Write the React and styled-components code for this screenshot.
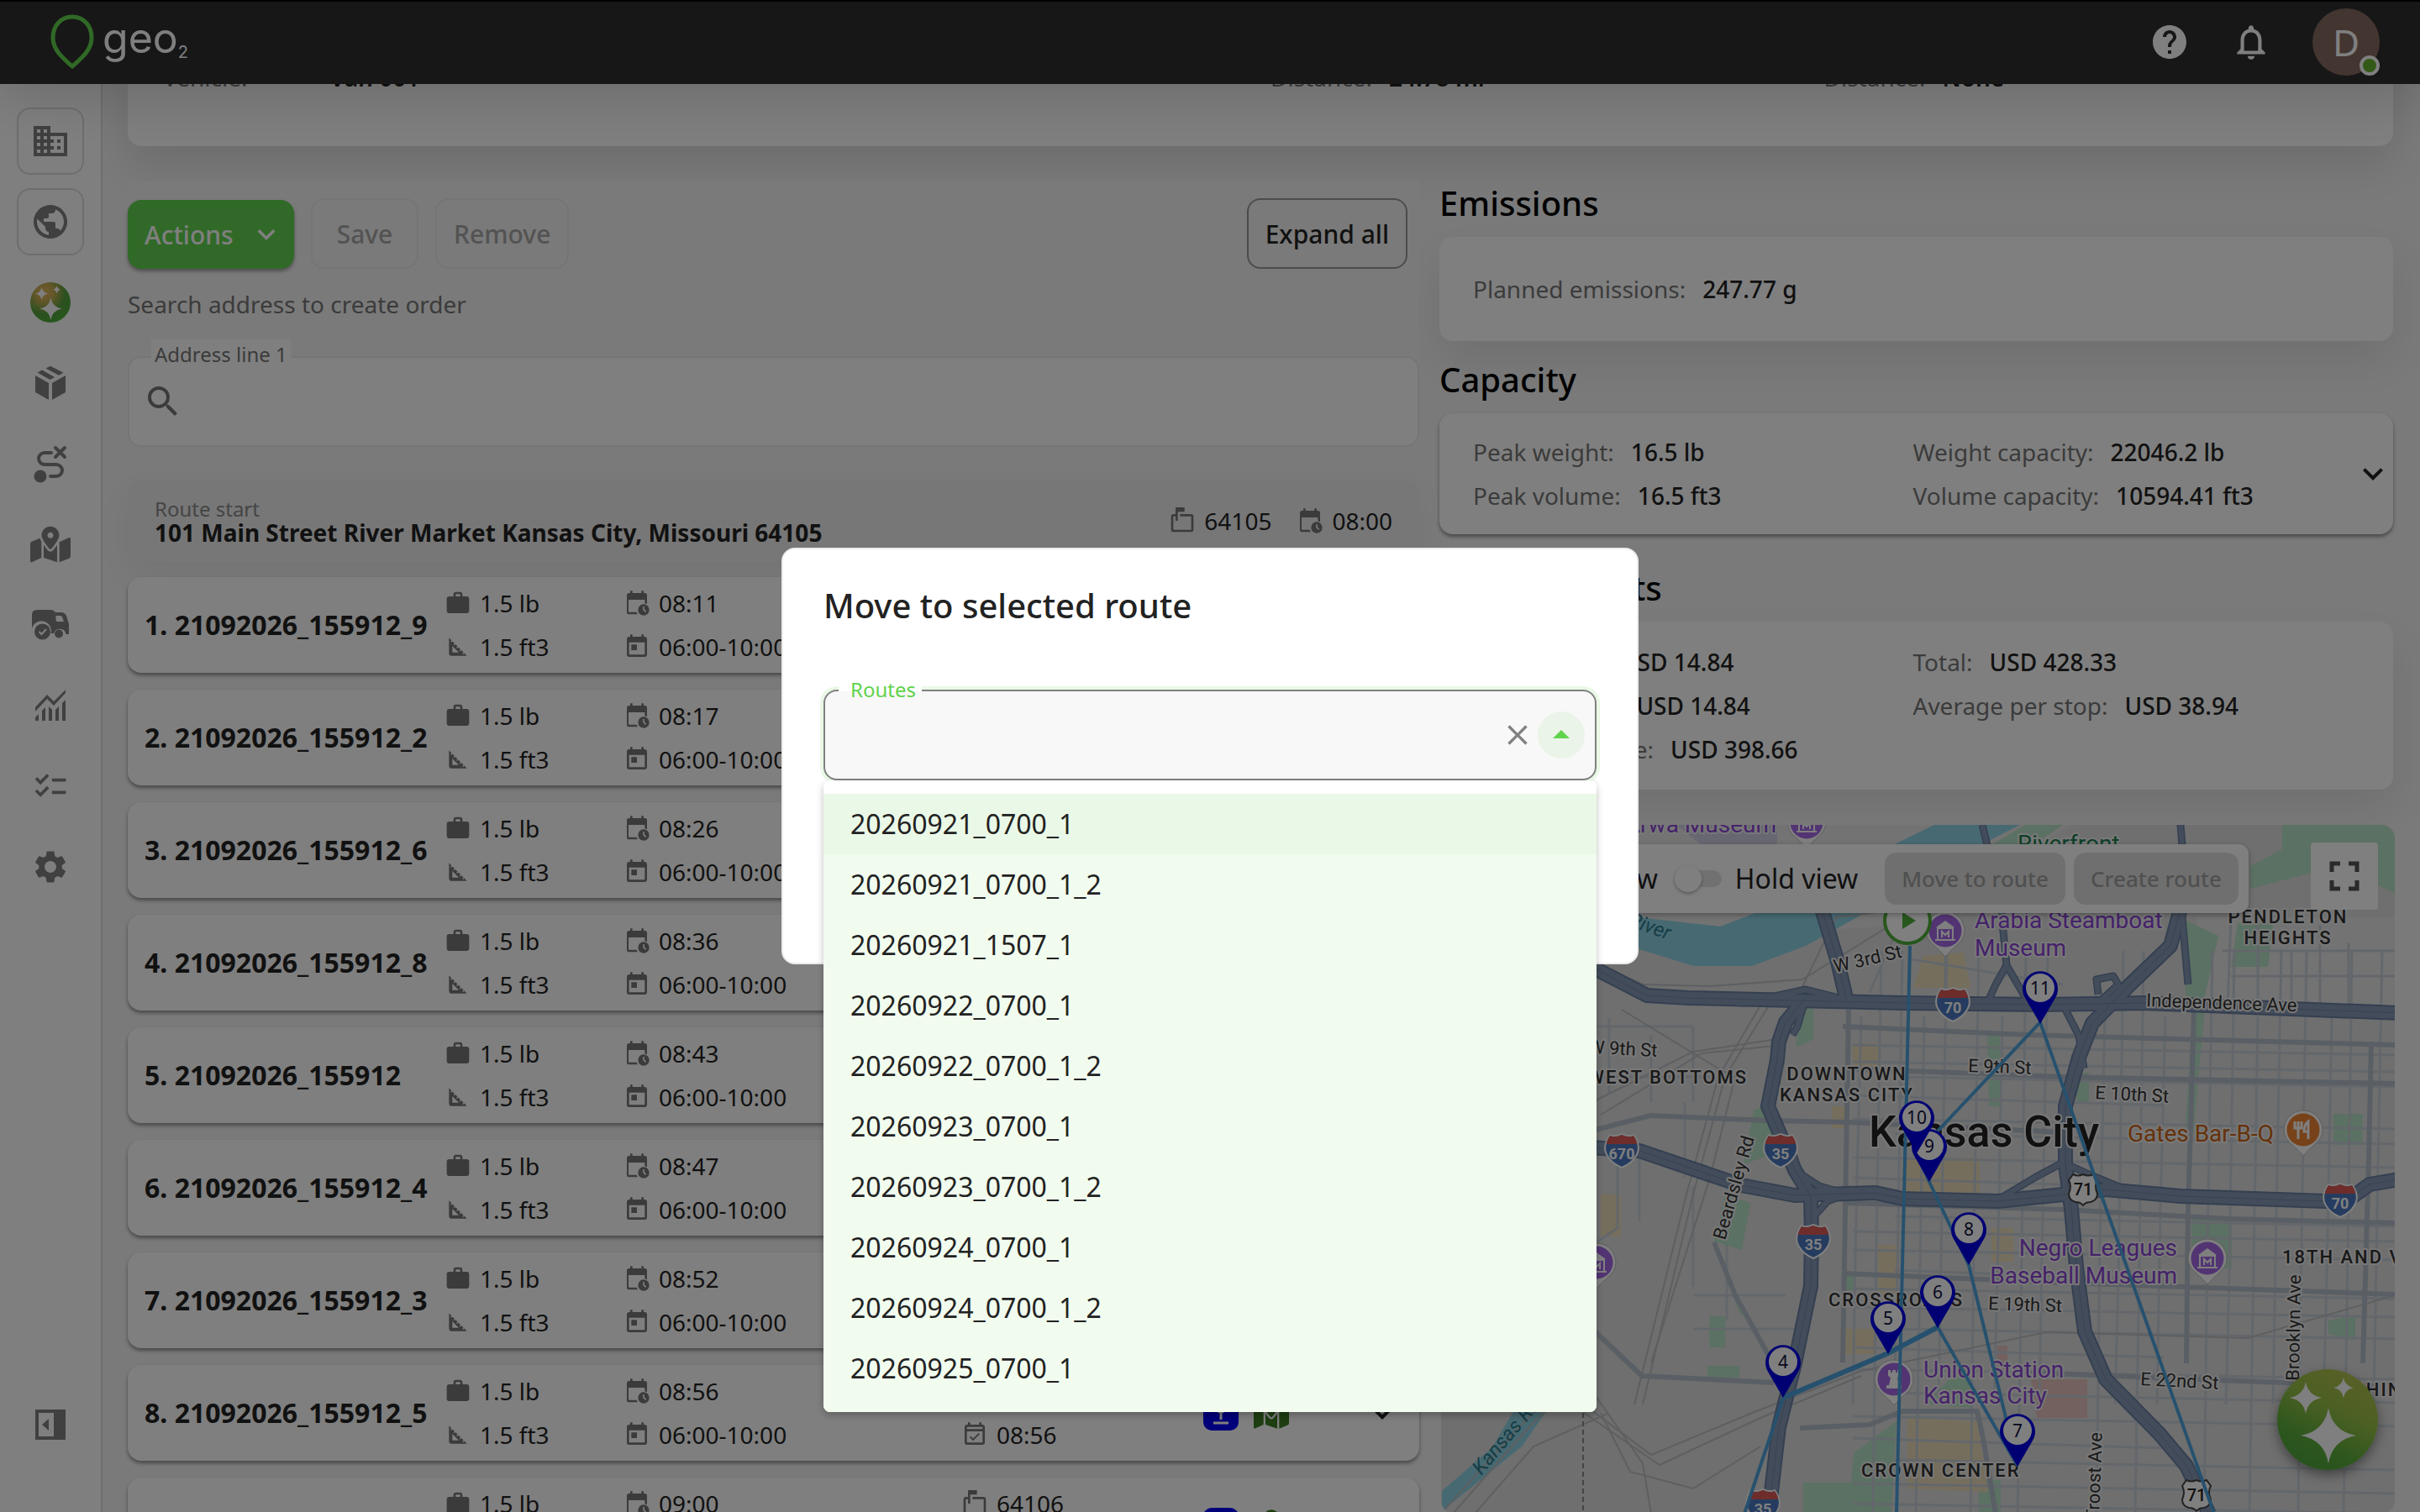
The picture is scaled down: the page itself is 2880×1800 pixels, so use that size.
import React, { useState } from "react";
import styled, { createGlobalStyle } from "styled-components";
import {
  MdDomain,
  MdPublic,
  MdChecklist,
  MdSettings,
  MdSearch,
  MdHelp,
  MdNotificationsNone,
  MdWork,
  MdSquareFoot,
  MdToday,
  MdOutlineMarkunreadMailbox,
  MdArrowDropUp,
  MdClose,
  MdExpandMore,
  MdFullscreen,
  MdOutlineEventAvailable,
} from "react-icons/md";
import { FaMapMarkedAlt } from "react-icons/fa";

const orders = [
  { id: "21092026_155912_9", eta: "08:11", zip: "64105" },
  { id: "21092026_155912_2", eta: "08:17", zip: "64105" },
  { id: "21092026_155912_6", eta: "08:26", zip: "64101" },
  { id: "21092026_155912_8", eta: "08:36", zip: "64102" },
  { id: "21092026_155912", eta: "08:43", zip: "64108" },
  { id: "21092026_155912_4", eta: "08:47", zip: "64108" },
  { id: "21092026_155912_3", eta: "08:52", zip: "64108" },
  { id: "21092026_155912_5", eta: "08:56", zip: "64108" },
  { id: "21092026_155912_1", eta: "09:00", zip: "64106" },
];

const routes = [
  "20260921_0700_1",
  "20260921_0700_1_2",
  "20260921_1507_1",
  "20260922_0700_1",
  "20260922_0700_1_2",
  "20260923_0700_1",
  "20260923_0700_1_2",
  "20260924_0700_1",
  "20260924_0700_1_2",
  "20260925_0700_1",
  "20260925_0700_1_2",
];

/* ---------- icons ---------- */

const PackageIcon = () => (
  <svg width="40" height="44" viewBox="0 0 40 44" fill="currentColor">
    <path d="M2 13l16 9v20L2 33zM38 13l-16 9v20l16-9zM4.500 9.500L10 6.500l15 8.600-5.500 3zM14.500 4.500L20 1.700l15.500 8-5.500 3z" />
  </svg>
);

const RouteIcon = () => (
  <svg width="44" height="48" viewBox="0 0 44 48" fill="none" stroke="currentColor" strokeWidth="4" strokeLinecap="round">
    <path d="M23 11h-8a7 7 0 0 0 0 14h14a7 7 0 0 1 0 14h-7" />
    <path d="M28 5l11 11M39 5L28 16" />
    <circle cx="10" cy="39" r="7.500" fill="currentColor" stroke="none" />
  </svg>
);

const TruckIcon = () => (
  <svg width="48" height="48" viewBox="0 0 48 48" fill="currentColor">
    <path d="M2 28V12q0-6 6-6h16q4 0 6 3h7q4 0 6 4l3 10v12h-3.500a7.500 7.500 0 0 0-14.500-1h-3.500A11.500 11.500 0 0 0 2 28zM30.500 13v5q0 2 2 2h7.500l-2-5.500q-.7-1.500-2.500-1.500z" fillRule="evenodd" />
    <circle cx="14.500" cy="32" r="9.500" />
    <circle cx="34" cy="34.500" r="5" />
    <path d="M10.500 32l3 3 5.500-6" fill="none" stroke="#fff" strokeWidth="2" />
  </svg>
);

const ChartIcon = () => (
  <svg width="40" height="40" viewBox="0 0 40 40" fill="currentColor">
    <path d="M2 27L16 12l8 8L38 5V1L24 15l-8-8L2 22zM2 38v-4l4-4v8zM10 38V26l4-4v16zM18 38V21l4 4v13zM26 38V25l4-4v17zM34 38V17l4-4v25z" />
  </svg>
);

const CollapseIcon = () => (
  <svg width="40" height="40" viewBox="0 0 40 40">
    <rect x="4" y="4" width="32" height="32" fill="none" stroke="currentColor" strokeWidth="4" />
    <path d="M24 4h12v32H24zM18 13v14l-8-7z" fill="currentColor" />
  </svg>
);

const CalendarClockIcon = () => (
  <svg width="32" height="32" viewBox="0 0 24 24" fill="currentColor">
    <path d="M5 20a.5.5 0 0 1-.5-.5V9H19v3.200a6 6 0 0 1 2 .8V5a2 2 0 0 0-2-2h-1V1h-2v2H8V1H6v2H5a2 2 0 0 0-2 2v15a2 2 0 0 0 2 2h7.800a6 6 0 0 1-1-2z" />
    <path d="M18 13a5 5 0 1 0 0 10 5 5 0 0 0 0-10zm1.600 7.300L17.400 18v-3h1.200v2.500l1.800 1.900z" />
  </svg>
);

const PinActionIcon = () => (
  <svg width="42" height="42" viewBox="0 0 42 42">
    <rect width="42" height="42" rx="10" fill="#0000f5" />
    <circle cx="21" cy="14" r="6" fill="none" stroke="#fff" strokeWidth="3" />
    <path d="M21 20v9M12 33h18" stroke="#fff" strokeWidth="3" />
  </svg>
);

const STAR = "M0-10Q1.500-1.500 10 0Q1.500 1.500 0 10Q-1.500 1.500-10 0Q-1.500-1.500 0-10z";

const SparkIcon = ({ size, children }) => (
  <svg width={size} height={size} viewBox="0 0 120 120">
    <defs>{children}</defs>
    <circle cx="60" cy="60" r="60" fill={`url(#spark${size})`} />
    <g fill="#fff">
      <path d={STAR} transform="translate(61 79) scale(3.3)" />
      <path d={STAR} transform="translate(34 34) scale(1.900)" />
      <path d={STAR} transform="translate(79 22) scale(1.200)" />
    </g>
  </svg>
);

const NavSpark = () => (
  <SparkIcon size={48}>
    <radialGradient id="spark48" cx="0.35" cy="0.25" r="0.8">
      <stop offset="0" stopColor="#e8b860" />
      <stop offset="0.3" stopColor="#c4ac50" />
      <stop offset="0.65" stopColor="#58a040" />
      <stop offset="1" stopColor="#4cb038" />
    </radialGradient>
  </SparkIcon>
);

const FabSpark = () => (
  <SparkIcon size={120}>
    <linearGradient id="spark120" x1="0.8" y1="0" x2="0.3" y2="1">
      <stop offset="0" stopColor="#b4c050" />
      <stop offset="0.4" stopColor="#98c048" />
      <stop offset="0.75" stopColor="#5cae3c" />
      <stop offset="1" stopColor="#50a43c" />
    </linearGradient>
  </SparkIcon>
);

/* ---------- map ---------- */

const minorV = [500, 524, 549, 575, 602, 640, 668, 696, 722, 790, 812, 836, 862, 918, 944, 972, 1000, 1030, 1060, 1084, 1120];
const minorH = [244, 262, 282, 300, 322, 350, 368, 396, 420, 466, 484, 506, 530, 552, 574, 600, 622, 648, 676, 704, 730, 756, 784, 808];

const highways = [
  "130,130 185,172 245,203 294,206 549,212 714,214 836,212 1140,224",
  "434,206 410,235 402,258 400,280 389,335 402,365 421,411 440,442 441,488 440,549 421,641 402,717 390,820",
  "150,382 236,388 357,429 421,441 517,438 549,445 663,448 740,440 791,434 880,442 1053,448 1080,446 1105,428 1140,422",
  "880,100 868,144 820,190 775,236 759,277 743,335 743,404 750,457 756,526 766,603 791,660 855,725 887,763 914,820",
  "453,100 472,163 482,206",
];

const ramps = [
  "663,446 708,419 740,402 778,419 829,440",
  "667,104 670,137 673,167 695,205 714,214",
  "673,167 660,190 650,212",
  "644,0 650,24",
  "880,0 882,24",
  "294,206 360,212 434,196 470,205",
  "740,214 759,251 765,290",
  "882,110 889,190",
  "782,202 780,184 800,180 806,190 786,208",
  "421,411 450,430 478,438",
  "440,470 460,448 480,440",
  "402,365 420,395 432,440",
  "434,206 424,240 418,250",
];

const streets = [
  "485,220 482,400 478,640",
  "896,220 889,457 887,641",
  "1107,258 1104,400 1097,641",
  "478,240 700,250 1135,262",
  "180,364 249,346 390,352 485,354 740,366",
  "478,450 740,458 938,469 1135,474",
  "478,534 740,545 1135,559",
  "180,600 239,656 396,664",
  "702,652 900,660 1110,668",
  "427,718 510,714 549,698 638,698 645,730 660,820",
  "478,290 740,300 1135,308",
  "325,497 350,560 400,650",
];

const rails = [
  "215,220 330,290 350,300 320,420 250,640",
  "180,330 300,270 400,255 470,110 520,104",
  "190,345 310,272 408,262",
  "380,215 330,300 292,440 230,690",
  "390,215 338,300 300,440 240,690",
  "185,165 240,190 320,192 430,184 560,104",
  "170,690 250,750 370,700 500,650 720,604 960,611 1135,560",
  "170,700 260,762 380,706 500,656",
  "0,820 90,720 150,660",
  "14,820 100,722 160,660",
  "40,820 110,740 200,700",
  "170,660 240,760 250,820",
  "190,700 225,770 300,790 380,740",
];

const Shield = ({ x, y, n }) => (
  <g transform={`translate(${x} ${y})`}>
    <path d="M-14-19q5 3 14-1q9 4 14 1q10 14 3 25q-5 9-17 14q-12-5-17-14q-7-11 3-25z" fill="#4a78c0" stroke="#fff" strokeWidth="2" />
    <path d="M-14-18q5 3 14-1q9 4 14 1q4 6 4 10h-36q0-4 4-10z" fill="#dc5a54" />
    <text y="10" fontSize="18" fontWeight="700" fill="#fff" textAnchor="middle">{n}</text>
  </g>
);

const UsShield = ({ x, y }) => (
  <g transform={`translate(${x} ${y})`}>
    <path d="M-12-18q6 3 12 0q6 3 12 0l5 7q-4 7 0 16q0 8-8 10q-6 0-9 4q-3-4-9-4q-8-2-8-10q4-9 0-16z" fill="#fff" stroke="#444" strokeWidth="2" />
    <text y="7" fontSize="20" fontWeight="500" fill="#222" textAnchor="middle">71</text>
  </g>
);

const Poi = ({ x, y, color = "#a468e6", kind = "museum" }) => (
  <g transform={`translate(${x} ${y})`}>
    <path d="M0-24a23 23 0 0 1 23 23q0 10-10 18Q5 24 0 30Q-5 24-13 17Q-23 9-23-1A23 23 0 0 1 0-24z" fill="#fff" stroke="#bbb" />
    <circle cy="-1" r="19.500" fill={color} />
    {kind === "museum" && (
      <g fill="none" stroke="#fff" strokeWidth="2">
        <path d="M-9 9V-4h18V9M-12 10h24M-4 7v-7l4 4 4-4v7" />
        <path d="M-11-5h22L0-13z" fill="#fff" stroke="none" />
      </g>
    )}
    {kind === "food" && (
      <path d="M-6-11v21M-10-11v8h8v-8M6 10V-11q-5 4-5 12h5" fill="none" stroke="#fff" strokeWidth="3" />
    )}
    {kind === "tower" && (
      <path d="M-7-12h3v3h2v-3h4v3h2v-3h3v7l-3 2 2 9h3v4H-9v-4h3l2-9-3-2z" fill="#fff" />
    )}
  </g>
);

const Pin = ({ x, y, n }) => (
  <g transform={`translate(${x} ${y})`}>
    <path d="M0 0L-18-31A21 21 0 1 1 18-31z" fill="#0000e6" />
    <circle cy="-43" r="17" fill="#fff" />
    <text y="-35" fontSize="21" fill="#101040" textAnchor="middle" fontFamily="Noto Sans, sans-serif">{n}</text>
  </g>
);

const RouteMap = () => (
  <MapSvg>
    <rect width="100%" height="100%" fill="#dedede" />
    <path d="M150 0h600l-200 120-370 20zM900 110h240v110H900z" fill="#e6e6e6" />
    <g fill="#b6e2c6">
      <path d="M1001 0h140v84l-30-14-71-14-77 20V49l38-20zM883 112l42 20-20 90h-18zM695 0h45l-35 24h-50z" />
      <path d="M425 215h18v40l-20 10zM372 340l20-10 8 60-40 14zM338 440l30 10-10 56-33-10zM650 247h15v88h-13zM756 295h15v36h-15z" />
      <path d="M893 466h48v62h-48zM1062 344h35v37h-35zM1056 590l32-6v30l-32-8zM319 585h19v37h-19zM317 644h38v14h-38zM338 535l26 48h-8zM479 534h12v20h-12z" />
      <path d="M542 710l-51 38-3 35h-57v40h105zM575 690l50-50 8 54zM895 220h14l-14 150h-10zM948 117h42l-6 52h-44zM640 780h26v40h-26z" />
    </g>
    <g fill="#eddcb8">
      <path d="M574 156l48-4 8 42h-68zM549 396h92v42h-92zM555 706l83 4 13 84-96-4zM490 260h30v30h-30zM465 335h16v26h-16zM520 500h22v60h-22zM190 440h24v50h-24zM475 600h40v30h-40zM655 480h26v40h-26z" />
    </g>
    <path d="M702 660h67v46h-60zM662 620h12v34h-12z" fill="#e6c2be" />
    <path d="M280 0h120v24h-90z" fill="#cfcfe4" />
    <path d="M587 0h102L638 26 504 105l-70 39-64 24h-70l-64-20-60-70 59 32 97 11 44-17 166-82zM1 793l60-52 30-51h40l-35 50L1 817zM196 168l16 10-10 12-12-8z" fill="#8fd3e4" />
    <g fill="none" stroke="#c6ced6" strokeWidth="3">
      {minorV.map((x, i) => (
        <path key={x} d={`M${x} ${i % 3 === 0 ? 228 : 150}L${x - 6} ${460 + (i % 4) * 40}L${x - 10} ${i % 2 ? 820 : 690}`} />
      ))}
      {minorH.map((y, i) => (
        <path key={y} d={`M${i % 3 ? 490 : 540} ${y}L${i % 4 ? 1136 : 860} ${y + 12}`} />
      ))}
      <path d="M940 110l-4 110M972 100v120M1012 150v70M1046 120v100M1080 140v80M930 150h205M940 180h195M560 160l180 30M540 130l-30 70M600 150v60" />
      <path d="M200 230v90M250 250v80M300 240v90M180 300h160M180 240h120M290 330v90M300 430v120M340 500v90M300 560h110M300 600h120M210 390v90l-30 20M236 392v80" />
    </g>
    <g fill="none" stroke="#bcbec2" strokeWidth="2">
      {rails.map((p) => <polyline key={p} points={p} />)}
    </g>
    <g fill="none" stroke="#b4bfca" strokeWidth="6">
      {streets.map((p) => <polyline key={p} points={p} />)}
    </g>
    <g fill="none" strokeLinejoin="round">
      {ramps.map((p) => <polyline key={p} points={p} stroke="#687fa2" strokeWidth="9" />)}
      {highways.map((p) => <polyline key={p} points={p} stroke="#687fa2" strokeWidth="18" />)}
      {ramps.map((p) => <polyline key={p} points={p} stroke="#8799b4" strokeWidth="6" />)}
      {highways.map((p) => <polyline key={p} points={p} stroke="#8799b4" strokeWidth="14" />)}
      {highways.map((p) => <polyline key={p} points={p} stroke="#7085a4" strokeWidth="1" />)}
    </g>
    <path d="M169 700v120" stroke="#888" strokeWidth="2" strokeDasharray="6 4" />

    <MapLabels>
      <g className="street">
        <text x="257" y="276" textAnchor="end" transform="rotate(3 257 276)">W 9th St</text>
        <text x="469" y="176" transform="rotate(-13 469 176)">W 3rd St</text>
        <text x="627" y="294" transform="rotate(2 627 294)">E 9th St</text>
        <text x="778" y="326" transform="rotate(3 778 326)">E 10th St</text>
        <text x="651" y="577" transform="rotate(2 651 577)">E 19th St</text>
        <text x="832" y="667" transform="rotate(3 832 667)">E 22nd St</text>
        <text x="839" y="216" transform="rotate(2 839 216)">Independence Ave</text>
        <text x="338" y="495" transform="rotate(-74 338 495)">Beardsley Rd</text>
        <text x="1021" y="662" transform="rotate(-89 1021 662)">Brooklyn Ave</text>
        <text x="783" y="828" transform="rotate(-88 783 828)">Troost Ave</text>
      </g>
      <g className="district">
        <text x="365" y="308" textAnchor="end">WEST BOTTOMS</text>
        <text x="483" y="304" textAnchor="middle">DOWNTOWN</text>
        <text x="483" y="329" textAnchor="middle">KANSAS CITY</text>
        <text x="461" y="573">CROSSROADS</text>
        <text x="500" y="776">CROWN CENTER</text>
        <text x="1001" y="522">18TH AND VINE</text>
        <text x="1048" y="680">WASHINGTON</text>
        <text x="1008" y="117" textAnchor="middle">PENDLETON</text>
        <text x="1008" y="142" textAnchor="middle">HEIGHTS</text>
      </g>
      <text className="city" x="509" y="383">Kansas City</text>
      <g className="museum">
        <text x="399" y="9" textAnchor="end">Arwa Museum</text>
        <text x="635" y="123">Arabia Steamboat</text>
        <text x="635" y="156">Museum</text>
        <text x="876" y="513" textAnchor="end">Negro Leagues</text>
        <text x="876" y="546" textAnchor="end">Baseball Museum</text>
        <text x="574" y="658">Union Station</text>
        <text x="574" y="689">Kansas City</text>
      </g>
      <text className="food" x="991" y="377" textAnchor="end">Gates Bar-B-Q</text>
      <text className="park" x="686" y="32">Riverfront</text>
      <text className="water" x="270" y="137" textAnchor="end" transform="rotate(20 270 137)">Missouri River</text>
      <text className="water" x="48" y="775" transform="rotate(-50 48 775)">Kansas River</text>
    </MapLabels>

    <Shield x="609" y="214" n="70" />
    <Shield x="215" y="388" n="670" />
    <Shield x="404" y="388" n="35" />
    <Shield x="443" y="496" n="35" />
    <Shield x="383" y="811" n="35" />
    <Shield x="1070" y="447" n="70" />
    <UsShield x="764" y="434" />
    <UsShield x="899" y="798" />
    <Poi x="435" y="-2" />
    <Poi x="600" y="127" />
    <Poi x="912" y="517" />
    <Poi x="539" y="661" kind="tower" />
    <Poi x="185" y="522" />
    <Poi x="1026" y="364" color="#ee8434" kind="food" />

    <g fill="none" stroke="#4da3dc" strokeWidth="4">
      <path d="M558 144L542 820M361 820L407 682M532 629L591 598L686 763L628 524L581 425L566 391L713 235L920 820" />
      <path d="M407 682L532 629L591 598" strokeWidth="6" />
    </g>
    <circle cx="555" cy="114" r="27" fill="#fff" stroke="#4fae3a" strokeWidth="4" />
    <path d="M549 104v20l16-10z" fill="#4fae3a" />
    <Pin x="713" y="237" n="11" />
    <Pin x="581" y="425" n="9" />
    <Pin x="566" y="391" n="10" />
    <Pin x="628" y="524" n="8" />
    <Pin x="591" y="599" n="6" />
    <Pin x="532" y="630" n="5" />
    <Pin x="407" y="682" n="4" />
    <Pin x="686" y="764" n="7" />
  </MapSvg>
);

/* ---------- page ---------- */

const Stat = ({ label, value }) => (
  <StatLine>
    <span>{label}:</span>
    <strong>{value}</strong>
  </StatLine>
);

const Meta = ({ icon, children }) => (
  <MetaLine>
    <MetaIcon>{icon}</MetaIcon>
    {children}
  </MetaLine>
);

const OrderRow = ({ index, order }) => (
  <OrderCard>
    <OrderTitle>{index}. {order.id}</OrderTitle>
    <div>
      <Meta icon={<MdWork size={32} />}>1.5 lb</Meta>
      <Meta icon={<MdSquareFoot size={32} />}>1.5 ft3</Meta>
    </div>
    <div>
      <Meta icon={<CalendarClockIcon />}>{order.eta}</Meta>
      <Meta icon={<MdToday size={32} />}>06:00-10:00</Meta>
    </div>
    <div>
      <Meta icon={<MdOutlineMarkunreadMailbox size={32} />}>{order.zip}</Meta>
      <Meta icon={<MdOutlineEventAvailable size={32} />}>{order.eta}</Meta>
    </div>
    <OrderActions>
      <IconButton aria-label="Locate order"><PinActionIcon /></IconButton>
      <IconButton aria-label="Show on map" $color="#3a7d20"><FaMapMarkedAlt size={42} /></IconButton>
      <IconButton aria-label="Expand order" $end $color="#222"><MdExpandMore size={48} /></IconButton>
    </OrderActions>
  </OrderCard>
);

const App = () => {
  const [route, setRoute] = useState("");
  const [active, setActive] = useState(0);

  return (
    <Shell>
      <GlobalStyle />
      <Header>
        <Logo>
          <svg width="56" height="66" viewBox="0 0 56 66">
            <path d="M28 3C13 3 5 15 5 28c0 15 13 25 23 34 10-9 23-19 23-34C51 15 43 3 28 3z" fill="none" stroke="#60d34c" strokeWidth="5" />
          </svg>
          <LogoText>geo<sub>2</sub></LogoText>
        </Logo>
        <HeaderTools>
          <IconButton aria-label="Help" $color="#fff"><MdHelp size={48} /></IconButton>
          <IconButton aria-label="Notifications" $color="#fff"><MdNotificationsNone size={50} /></IconButton>
          <Avatar>D<StatusDot /></Avatar>
        </HeaderTools>
      </Header>

      <Body>
        <Sidebar>
          <NavButton $boxed aria-label="Company"><MdDomain size={48} /></NavButton>
          <NavButton $boxed aria-label="Region"><MdPublic size={48} /></NavButton>
          <NavButton aria-label="Assistant"><NavSpark /></NavButton>
          <NavButton aria-label="Orders"><PackageIcon /></NavButton>
          <NavButton aria-label="Routes"><RouteIcon /></NavButton>
          <NavButton aria-label="Map"><FaMapMarkedAlt size={48} /></NavButton>
          <NavButton aria-label="Vehicles"><TruckIcon /></NavButton>
          <NavButton aria-label="Analytics"><ChartIcon /></NavButton>
          <NavButton aria-label="Tasks"><MdChecklist size={44} /></NavButton>
          <NavButton aria-label="Settings"><MdSettings size={46} /></NavButton>
          <NavButton $last aria-label="Collapse menu"><CollapseIcon /></NavButton>
        </Sidebar>

        <Main>
          <InfoCard>
            <InfoLine $wide><span>Vehicle:</span><strong>Van 001</strong></InfoLine>
            <InfoLine><span>Distance:</span><strong>24.78 mi</strong></InfoLine>
            <InfoLine><span>Distance:</span><strong>None</strong></InfoLine>
          </InfoCard>

          <Columns>
            <OrdersPane>
              <Toolbar>
                <PrimaryButton>Actions <MdExpandMore size={42} /></PrimaryButton>
                <OutlineButton disabled>Save</OutlineButton>
                <OutlineButton disabled>Remove</OutlineButton>
                <OutlineButton $end>Expand all</OutlineButton>
              </Toolbar>
              <Hint>Search address to create order</Hint>
              <AddressField>
                <label htmlFor="address">Address line 1</label>
                <MdSearch size={48} />
                <input id="address" type="text" />
              </AddressField>

              <RouteStart>
                <div>
                  <small>Route start</small>
                  <b>101 Main Street River Market Kansas City, Missouri 64105</b>
                </div>
                <RouteStartMeta>
                  <Meta icon={<MdOutlineMarkunreadMailbox size={32} />}>64105</Meta>
                  <Meta icon={<CalendarClockIcon />}>08:00</Meta>
                </RouteStartMeta>
              </RouteStart>

              <OrderList>
                {orders.map((order, i) => (
                  <OrderRow key={order.id} index={i + 1} order={order} />
                ))}
              </OrderList>
            </OrdersPane>

            <SidePane>
              <PanelTitle>Emissions</PanelTitle>
              <StatCard $tall>
                <StatGrid>
                  <Stat label="Planned emissions" value="247.77 g" />
                </StatGrid>
              </StatCard>
              <PanelTitle>Capacity</PanelTitle>
              <StatCard $raised>
                <StatGrid>
                  <Stat label="Peak weight" value="16.5 lb" />
                  <Stat label="Weight capacity" value="22046.2 lb" />
                  <Stat label="Peak volume" value="16.5 ft3" />
                  <Stat label="Volume capacity" value="10594.41 ft3" />
                </StatGrid>
                <IconButton aria-label="Expand capacity" $color="#222"><MdExpandMore size={48} /></IconButton>
              </StatCard>
              <PanelTitle $spaced>Planned costs</PanelTitle>
              <StatCard>
                <StatGrid>
                  <Stat label="Driver time" value="USD 14.84" />
                  <Stat label="Total" value="USD 428.33" />
                  <Stat label="Waiting time" value="USD 14.84" />
                  <Stat label="Average per stop" value="USD 38.94" />
                  <Stat label="Fixed per usage" value="USD 398.66" />
                </StatGrid>
              </StatCard>

              <MapBox>
                <RouteMap />
                <MapToolbar>
                  <SwitchLabel><input type="checkbox" />Map view</SwitchLabel>
                  <SwitchLabel><input type="checkbox" />Hold view</SwitchLabel>
                  <MapActions>
                    <MapButton disabled>Move to route</MapButton>
                    <MapButton disabled>Create route</MapButton>
                  </MapActions>
                </MapToolbar>
                <FullscreenButton aria-label="Fullscreen"><MdFullscreen size={60} /></FullscreenButton>
              </MapBox>
            </SidePane>
          </Columns>
        </Main>
      </Body>

      <Fab aria-label="Assistant"><FabSpark /></Fab>

      <Backdrop>
        <Dialog role="dialog" aria-labelledby="move-title">
          <DialogTitle id="move-title">Move to selected route</DialogTitle>
          <RouteField>
            <label htmlFor="routes">Routes</label>
            <input id="routes" type="text" value={route} onChange={(e) => setRoute(e.target.value)} />
            <IconButton aria-label="Clear" $color="#808080" onClick={() => setRoute("")}><MdClose size={40} /></IconButton>
            <ToggleButton aria-label="Close list"><MdArrowDropUp size={48} /></ToggleButton>
            <Menu role="listbox">
              {routes.map((name, i) => (
                <Option
                  key={name}
                  role="option"
                  aria-selected={i === active}
                  $active={i === active}
                  onMouseEnter={() => setActive(i)}
                  onClick={() => setRoute(name)}
                >
                  {name}
                </Option>
              ))}
            </Menu>
          </RouteField>
        </Dialog>
      </Backdrop>
    </Shell>
  );
};

export default App;

const GlobalStyle = createGlobalStyle`
  * {
    box-sizing: border-box;
  }
  body {
    margin: 0;
    background: #f4f4f4;
    color: #222;
    font: 400 28px/40px "Noto Sans", sans-serif;
  }
  button, input {
    font-family: inherit;
  }
  button {
    cursor: pointer;
  }
  svg {
    flex-shrink: 0;
  }
`;

const Shell = styled.div`
  display: flex;
  flex-direction: column;
  height: 100vh;
  overflow: hidden;
`;

const Header = styled.header`
  position: relative;
  z-index: 2;
  display: flex;
  align-items: center;
  justify-content: space-between;
  flex-shrink: 0;
  height: 100px;
  padding: 0 48px 0 58px;
  background: #2e2e2e;
  box-shadow: inset 0 2px 0 #000, 0 16px 64px rgba(0, 0, 0, 0.16);
`;

const Logo = styled.div`
  display: flex;
  align-items: center;
  gap: 8px;
`;

const LogoText = styled.div`
  padding-bottom: 10px;
  color: #fff;
  font: 400 50px/60px Inter, sans-serif;

  sub {
    font-size: 20px;
    line-height: 20px;
    vertical-align: -6px;
  }
`;

const HeaderTools = styled.div`
  display: flex;
  align-items: center;
  gap: 48px;
`;

const IconButton = styled.button`
  display: flex;
  align-items: center;
  justify-content: center;
  padding: 0;
  border: 0;
  background: none;
  color: ${({ $color }) => $color || "inherit"};
  margin-left: ${({ $end }) => ($end ? "auto" : "0")};
`;

const Avatar = styled.div`
  position: relative;
  width: 80px;
  height: 80px;
  border-radius: 50%;
  background: #866b61;
  color: #fff;
  font-size: 44px;
  line-height: 80px;
  text-align: center;
`;

const StatusDot = styled.span`
  position: absolute;
  right: 0;
  bottom: 0;
  width: 24px;
  height: 24px;
  border: 4px solid #fff;
  border-radius: 50%;
  background: #64b32c;
`;

const Body = styled.div`
  display: flex;
  flex: 1;
  min-height: 0;
`;

const Sidebar = styled.nav`
  display: flex;
  flex-direction: column;
  align-items: center;
  gap: 16px;
  flex-shrink: 0;
  width: 122px;
  padding: 28px 0 64px;
  border-right: 2px solid #dcdcdc;
  background: #fff;
`;

const NavButton = styled.button`
  display: flex;
  align-items: center;
  justify-content: center;
  flex-shrink: 0;
  width: 80px;
  height: 80px;
  padding: 0;
  border: ${({ $boxed }) => ($boxed ? "2px solid #dcdcdc" : "0")};
  border-radius: 16px;
  background: none;
  color: #808080;
  margin-top: ${({ $last }) => ($last ? "auto" : "0")};
`;

const Main = styled.main`
  flex: 1;
  min-width: 0;
  padding: 0 32px 0 30px;
  overflow: hidden;
`;

const InfoCard = styled.section`
  display: grid;
  grid-template-columns: 1317fr 658fr 677fr;
  height: 134px;
  margin: -60px 0 0;
  padding: 32px 0 0 42px;
  border-radius: 16px;
  background: #fff;
  box-shadow: 0 24px 48px rgba(0, 0, 0, 0.1);
`;

const InfoLine = styled.div`
  display: flex;
  gap: ${({ $wide }) => ($wide ? "98px" : "20px")};

  span {
    color: #777;
  }
  strong {
    font-weight: 600;
  }
`;

const Columns = styled.div`
  display: grid;
  grid-template-columns: 1537fr 1135fr;
  gap: 24px;
  padding-top: 42px;
`;

const OrdersPane = styled.section`
  position: relative;
  min-width: 0;
  padding-top: 20px;
  background: #f4f4f4;
`;

const Toolbar = styled.div`
  display: flex;
  align-items: flex-end;
  gap: 20px;
  padding-right: 14px;
`;

const PrimaryButton = styled.button`
  display: flex;
  align-items: center;
  justify-content: space-between;
  width: 198px;
  height: 82px;
  padding: 0 12px 0 20px;
  border: 0;
  border-radius: 16px;
  background: #62d450;
  color: #fff;
  font-size: 30px;
  font-weight: 500;
  box-shadow: 0 3px 4px rgba(0, 0, 0, 0.35);
`;

const OutlineButton = styled.button`
  min-width: 128px;
  height: 84px;
  padding: 0 20px;
  border: 2px solid #999;
  border-radius: 16px;
  background: none;
  color: #222;
  font-size: 30px;
  font-weight: 500;
  margin-left: ${({ $end }) => ($end ? "auto" : "0")};

  &:disabled {
    border-color: #eaeaea;
    color: #a6a6a6;
  }
`;

const Hint = styled.p`
  margin: 22px 0 42px;
  color: #777;
`;

const AddressField = styled.div`
  position: relative;
  display: flex;
  align-items: center;
  height: 108px;
  padding: 0 16px;
  border: 2px solid #ebebeb;
  border-radius: 16px;
  background: #fff;
  color: #777;

  label {
    position: absolute;
    top: -22px;
    left: 26px;
    padding: 0 4px;
    background: #fff;
    font-size: 24px;
    line-height: 36px;
  }
  input {
    flex: 1;
    border: 0;
    outline: 0;
    background: none;
    font-size: 32px;
  }
`;

const RouteStart = styled.div`
  display: flex;
  align-items: center;
  justify-content: space-between;
  height: 98px;
  margin: 39px 0 18px;
  padding: 0 32px;
  border-radius: 16px;
  background: #eeeeee;
  box-shadow: 0 16px 40px rgba(0, 0, 0, 0.05);

  small, b {
    display: block;
    line-height: 28px;
  }
  small {
    color: #8a8a8a;
    font-size: 24px;
  }
  b {
    font-weight: 700;
  }
`;

const RouteStartMeta = styled.div`
  display: flex;
  gap: 30px;
`;

const MetaLine = styled.div`
  display: flex;
  align-items: center;
  gap: 10px;
  height: 52px;
  white-space: nowrap;
`;

const MetaIcon = styled.span`
  display: flex;
  justify-content: center;
  width: 32px;
  color: #777;
`;

const OrderList = styled.div`
  display: flex;
  flex-direction: column;
  gap: 20px;
`;

const OrderCard = styled.article`
  display: grid;
  grid-template-columns: 357px 213px 402px 288px 1fr;
  align-items: center;
  height: 114px;
  padding: 0 20px;
  border-radius: 16px;
  background: #fff;
  box-shadow: 0 3px 4px rgba(0, 0, 0, 0.4);
`;

const OrderTitle = styled.h3`
  margin: 0;
  font-size: 32px;
  font-weight: 700;
  white-space: nowrap;
`;

const OrderActions = styled.div`
  display: flex;
  align-items: center;
  gap: 18px;
`;

const SidePane = styled.aside`
  min-width: 0;
`;

const PanelTitle = styled.h2`
  margin: ${({ $spaced }) => ($spaced ? "38px" : "0")} 0 14px;
  color: #000;
  font-size: 40px;
  font-weight: 500;
  line-height: 52px;
`;

const StatCard = styled.div`
  display: flex;
  align-items: center;
  min-height: ${({ $tall }) => ($tall ? "124px" : "0")};
  margin-bottom: ${({ $raised }) => ($raised ? "0" : "20px")};
  padding: ${({ $raised }) => ($raised ? "20px 0 20px 40px" : "22px 48px 22px 40px")};
  border-radius: 16px;
  background: #fff;
  box-shadow: ${({ $raised }) =>
    $raised ? "0 3px 4px rgba(0, 0, 0, 0.4)" : "0 24px 48px rgba(0, 0, 0, 0.08)"};
`;

const StatGrid = styled.div`
  display: grid;
  grid-template-columns: 1fr 1fr;
  flex: 1;
`;

const StatLine = styled.div`
  display: flex;
  gap: 20px;
  line-height: 52px;
  white-space: nowrap;

  span {
    color: #777;
  }
  strong {
    font-weight: 500;
  }
`;

const MapBox = styled.div`
  position: relative;
  height: 820px;
  margin: 42px -2px 0 2px;
  border-radius: 16px;
  overflow: hidden;
`;

const MapSvg = styled.svg`
  display: block;
  width: 100%;
  height: 100%;
  font-family: Roboto, sans-serif;
`;

const MapLabels = styled.g`
  text {
    paint-order: stroke;
    stroke: #f0f0f0;
    stroke-width: 4px;
    stroke-linejoin: round;
  }
  .street {
    font-size: 22px;
    fill: #333;
  }
  .district {
    font-size: 22px;
    font-weight: 500;
    letter-spacing: 2px;
    fill: #333;
  }
  .city {
    font-size: 52px;
    font-weight: 500;
    fill: #222;
  }
  .museum {
    font-size: 28px;
    fill: #8a44d4;
  }
  .food {
    font-size: 28px;
    fill: #cc6414;
  }
  .park {
    font-size: 28px;
    fill: #1e7f50;
  }
  .water {
    font-size: 24px;
    font-style: italic;
    fill: #2c7c8c;
    stroke: none;
  }
`;

const MapToolbar = styled.div`
  position: absolute;
  top: 23px;
  left: 20px;
  right: 174px;
  display: flex;
  align-items: center;
  justify-content: flex-end;
  gap: 20px;
  height: 82px;
  padding: 0 12px;
  border-radius: 12px;
  background: #fff;
  box-shadow: 0 2px 6px rgba(0, 0, 0, 0.3);
`;

const SwitchLabel = styled.label`
  display: flex;
  align-items: center;
  gap: 16px;
  font-size: 32px;

  input {
    appearance: none;
    width: 56px;
    height: 20px;
    margin: 0;
    border-radius: 10px;
    background: #e2e2e2;
  }
  input::before {
    content: "";
    display: block;
    width: 32px;
    height: 32px;
    margin-top: -6px;
    border-radius: 50%;
    background: #fff;
    box-shadow: 0 2px 4px rgba(0, 0, 0, 0.3);
  }
`;

const MapActions = styled.div`
  display: flex;
  gap: 10px;
  margin-left: 12px;
`;

const MapButton = styled.button`
  height: 62px;
  padding: 0 20px;
  border: 0;
  border-radius: 14px;
  font-size: 26px;
  font-weight: 500;

  &:disabled {
    background: #dedede;
    color: #a0a0a0;
  }
`;

const FullscreenButton = styled.button`
  position: absolute;
  top: 21px;
  right: 20px;
  display: flex;
  align-items: center;
  justify-content: center;
  width: 80px;
  height: 80px;
  padding: 0;
  border: 0;
  border-radius: 4px;
  background: #fff;
  color: #555;
`;

const Fab = styled.button`
  position: fixed;
  right: 50px;
  bottom: 50px;
  display: flex;
  padding: 0;
  border: 0;
  border-radius: 50%;
  background: none;
  box-shadow: 0 6px 14px rgba(0, 0, 0, 0.4);
`;

const Backdrop = styled.div`
  position: fixed;
  inset: 0;
  z-index: 10;
  display: flex;
  align-items: center;
  justify-content: center;
  background: rgba(0, 0, 0, 0.5);
`;

const Dialog = styled.div`
  width: 1020px;
  height: 496px;
  padding: 43px 48px;
  border: 2px solid #ececec;
  border-radius: 16px;
  background: #fff;
`;

const DialogTitle = styled.h1`
  margin: 0 0 76px;
  font-size: 40px;
  font-weight: 500;
  line-height: 48px;
`;

const RouteField = styled.div`
  position: relative;
  display: flex;
  align-items: center;
  height: 108px;
  padding: 0 12px 0 30px;
  border: 2px solid #808080;
  border-radius: 16px;
  background: #f8f8f8;
  box-shadow: 0 0 0 4px #e9f9e6;

  label {
    position: absolute;
    top: -20px;
    left: 16px;
    padding: 0 7px 0 14px;
    background: linear-gradient(#fff 20px, #f8f8f8 20px);
    color: #60d34c;
    font-size: 24px;
    line-height: 36px;
  }
  input {
    flex: 1;
    min-width: 0;
    border: 0;
    outline: 0;
    background: none;
    font-size: 32px;
  }
`;

const ToggleButton = styled.button`
  display: flex;
  align-items: center;
  justify-content: center;
  width: 56px;
  height: 56px;
  margin-left: 4px;
  padding: 0;
  border: 0;
  border-radius: 50%;
  background: #eaf4e8;
  color: #60d34c;
`;

const Menu = styled.ul`
  position: absolute;
  top: 106px;
  left: -2px;
  right: -2px;
  max-height: 752px;
  margin: 0;
  padding: 16px 0 0;
  border-radius: 8px;
  background: #fff;
  box-shadow: 0 4px 8px rgba(0, 0, 0, 0.25);
  list-style: none;
  overflow: hidden;
`;

const Option = styled.li`
  padding: 0 32px;
  background: ${({ $active }) => ($active ? "#eaf9e7" : "#f1fcef")};
  font-size: 32px;
  line-height: 72px;
  cursor: pointer;
`;
